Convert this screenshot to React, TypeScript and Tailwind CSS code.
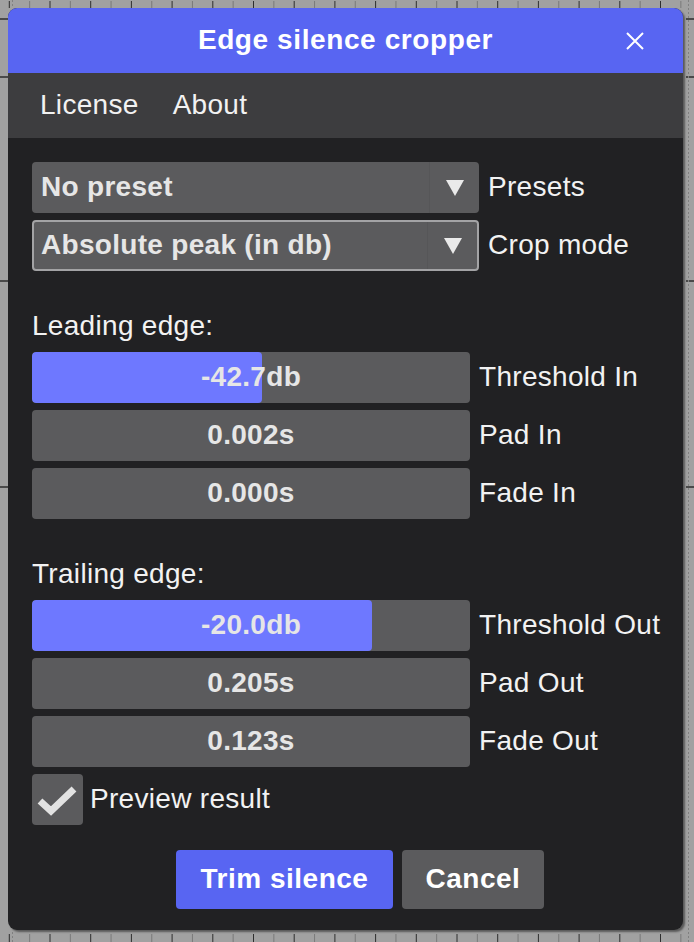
import React from "react";

const font = "font-['Liberation_Sans',Arial,sans-serif]";

function Background() {
  const ticks: React.ReactNode[] = [];
  for (let i = 0; i < 35; i++) {
    const x = 9.3 + i * 20.35;
    const dark = i % 2 === 0;
    const col = dark ? "#2e2e2e" : "#7a7a7a";
    ticks.push(<line key={"t" + i} x1={x} x2={x} y1={1} y2={8} stroke={col} strokeWidth={1} />);
    ticks.push(<line key={"b" + i} x1={x} x2={x} y1={934} y2={942} stroke={col} strokeWidth={1} />);
  }
  const ys = [19, 77, 281, 487];
  return (
    <svg className="absolute inset-0" width={694} height={942} viewBox="0 0 694 942">
      {ticks}
      {ys.map((y) => (
        <g key={y}>
          <line x1={0} x2={8} y1={y} y2={y} stroke="#2e2e2e" strokeWidth={1.5} />
          <line x1={686} x2={694} y1={y} y2={y} stroke="#2e2e2e" strokeWidth={1.5} />
        </g>
      ))}
      <line x1={688.5} x2={688.5} y1={0} y2={942} stroke="#808080" strokeWidth={1} strokeDasharray="2 2" />
      <line x1={12.5} x2={12.5} y1={0} y2={8} stroke="#808080" strokeWidth={1} strokeDasharray="2 2" />
      <line x1={12.5} x2={12.5} y1={932} y2={942} stroke="#808080" strokeWidth={1} strokeDasharray="2 2" />
    </svg>
  );
}

const label = "pb-[2px] text-[28px] tracking-[0.3px] text-[#f2f2f2] whitespace-nowrap";

function Dropdown({ text, focused }: { text: string; focused?: boolean }) {
  return (
    <div
      className={
        "w-[447px] h-[51px] shrink-0 rounded-[4px] bg-[#5b5b5d] flex items-stretch " +
        (focused ? "border-2 border-[#a3a3a5]" : "")
      }
    >
      <div
        className={
          "flex-1 flex items-center pb-[2px] text-[28px] tracking-[0.3px] font-bold text-[#e6e6e6] whitespace-nowrap " +
          (focused ? "pl-[7px]" : "pl-[9px]")
        }
      >
        {text}
      </div>
      <div className="w-[50px] border-l border-[#565658] flex items-center justify-center">
        <svg width="18" height="16" viewBox="0 0 18 16">
          <polygon points="0,0 18,0 9,16" fill="#eaeaea" />
        </svg>
      </div>
    </div>
  );
}

function Slider({ value, fill, text }: { value: string; fill?: number; text: string }) {
  return (
    <div className="flex items-center gap-[9px]">
      <div className="relative w-[438px] h-[51px] shrink-0 rounded-[4px] bg-[#5b5b5d] overflow-hidden">
        {fill !== undefined && (
          <div className="absolute left-0 top-0 bottom-0 rounded-[4px] bg-[#6e78ff]" style={{ width: fill }} />
        )}
        <div className="relative h-full flex items-center justify-center pb-[2px] text-[28px] tracking-[0.3px] font-bold text-[#e6e6e6]">
          {value}
        </div>
      </div>
      <div className={label}>{text}</div>
    </div>
  );
}

export default function App() {
  return (
    <div className={"relative w-[694px] h-[942px] bg-[#a1a1a1] overflow-hidden " + font}>
      <Background />
      <div className="relative pt-[8px] pl-[8px]">
        <div className="w-[675px] h-[922px] rounded-[9px] overflow-hidden bg-[#212123] shadow-[2px_2px_2px_rgba(0,0,0,0.45)] flex flex-col">
          <div className="relative h-[65px] shrink-0 bg-[#5865f2] flex items-center justify-center">
            <div className="pb-[2px] text-[28px] tracking-[0.6px] font-bold text-white whitespace-nowrap">
              Edge silence cropper
            </div>
            <svg className="absolute left-[618px] top-[24px]" width="18" height="18" viewBox="0 0 18 18">
              <path d="M1 1 L17 17 M17 1 L1 17" stroke="#ffffff" strokeWidth="2" />
            </svg>
          </div>
          <div className="h-[65px] shrink-0 bg-[#3d3d3f] flex items-center pl-[32px] pb-[2px] gap-[34px] text-[28px] tracking-[0.3px] text-[#f2f2f2]">
            <span>License</span>
            <span>About</span>
          </div>
          <div className="flex flex-col px-[24px] pt-[24px]">
            <div className="flex flex-col gap-[7px]">
              <div className="flex items-center gap-[9px]">
                <Dropdown text="No preset" />
                <div className={label}>Presets</div>
              </div>
              <div className="flex items-center gap-[9px]">
                <Dropdown text="Absolute peak (in db)" focused />
                <div className={label}>Crop mode</div>
              </div>
            </div>

            <div className="mt-[39px] h-[33px] leading-[32px] text-[28px] tracking-[0.3px] text-[#f2f2f2]">Leading edge:</div>
            <div className="mt-[9px] flex flex-col gap-[7px]">
              <Slider value="-42.7db" fill={230} text="Threshold In" />
              <Slider value="0.002s" text="Pad In" />
              <Slider value="0.000s" text="Fade In" />
            </div>

            <div className="mt-[39px] h-[33px] leading-[32px] text-[28px] tracking-[0.3px] text-[#f2f2f2]">Trailing edge:</div>
            <div className="mt-[9px] flex flex-col gap-[7px]">
              <Slider value="-20.0db" fill={340} text="Threshold Out" />
              <Slider value="0.205s" text="Pad Out" />
              <Slider value="0.123s" text="Fade Out" />
            </div>

            <div className="mt-[7px] flex items-center gap-[7px]">
              <div className="w-[51px] h-[51px] shrink-0 rounded-[4px] bg-[#5b5b5d] flex items-center justify-center">
                <svg width="51" height="51" viewBox="0 0 51 51">
                  <polyline
                    points="8,27 19,37 42,15"
                    fill="none"
                    stroke="#e2e2e2"
                    strokeWidth="7"
                    strokeLinejoin="miter"
                  />
                </svg>
              </div>
              <div className={label}>Preview result</div>
            </div>

            <div className="mt-[25px] ml-[144px] flex items-center gap-[9px]">
              <div className="w-[217px] h-[59px] shrink-0 rounded-[4px] bg-[#5865f2] flex items-center justify-center pb-[2px] text-[28px] tracking-[0.5px] font-bold text-white whitespace-nowrap">
                Trim silence
              </div>
              <div className="w-[142px] h-[59px] shrink-0 rounded-[4px] bg-[#5b5b5d] flex items-center justify-center pb-[2px] text-[28px] tracking-[0.5px] font-bold text-white">
                Cancel
              </div>
            </div>
          </div>
        </div>
      </div>
    </div>
  );
}
